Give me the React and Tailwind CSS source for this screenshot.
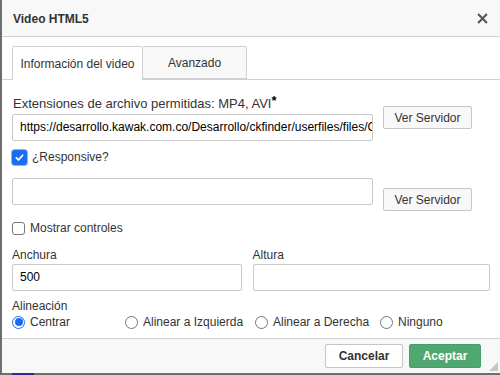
import React from 'react';

const font = { fontFamily: '"Liberation Sans", Arial, sans-serif' };

function Checkbox({ checked }) {
  if (checked) {
    return (
      <span className="flex h-[15px] w-[15px] items-center justify-center rounded-[3px] bg-[#1a6cf0] ring-1 ring-[#8ab4f8]">
        <svg width="11" height="11" viewBox="0 0 12 12" fill="none">
          <path d="M2.5 6.3l2.4 2.4 4.6-5.2" stroke="white" strokeWidth="1.9" strokeLinecap="round" strokeLinejoin="round" />
        </svg>
      </span>
    );
  }
  return <span className="block h-[13px] w-[13px] rounded-[3px] border border-[#767676] bg-white" />;
}

function Radio({ checked, label }) {
  return (
    <label className="flex items-center gap-[5px]">
      {checked ? (
        <span className="flex h-[13px] w-[13px] items-center justify-center rounded-full border border-[#1a6cf0] bg-white">
          <span className="block h-[8px] w-[8px] rounded-full bg-[#1a6cf0]" />
        </span>
      ) : (
        <span className="block h-[13px] w-[13px] rounded-full border border-[#767676] bg-white" />
      )}
      <span>{label}</span>
    </label>
  );
}

function Field({ value, className }) {
  return (
    <div className={`h-[27px] overflow-hidden whitespace-nowrap rounded-[2px] border border-[#c9c9c9] bg-white pl-[7px] text-[12px] leading-[25px] text-black ${className}`}>
      {value}
    </div>
  );
}

function ServerButton({ className }) {
  return (
    <button className={`h-[23px] w-[89px] rounded-[2px] border border-[#c6c6c6] bg-[#f8f8f8] text-[12px] text-[#333] ${className}`}>
      Ver Servidor
    </button>
  );
}

export default function App() {
  return (
    <div className="relative h-[375px] w-[500px] overflow-hidden bg-[#6e6e6e] text-[12px] text-[#333]" style={font}>
      <div className="ml-[2px] flex h-[373px] flex-col bg-white">
        {/* title */}
        <div className="flex h-[37px] items-center justify-between border-b border-[#d1d1d1] bg-[#f8f8f8] pl-[11px] pr-[12px] pt-[1px]">
          <span className="font-bold text-[#333]">Video HTML5</span>
          <svg width="11" height="11" viewBox="0 0 10 10">
            <path d="M1 1l8 8M9 1l-8 8" stroke="#555" strokeWidth="1.9" />
          </svg>
        </div>

        {/* tabs */}
        <div className="mt-[9px] flex border-b border-[#d1d1d1] pl-[10px]">
          <div className="-mb-px flex h-[34px] w-[131px] items-center justify-center rounded-t-[2px] border border-b-0 border-[#d1d1d1] bg-white">
            Información del video
          </div>
          <div className="flex h-[33px] w-[104px] items-center justify-center rounded-t-[2px] border border-l-0 border-[#d1d1d1] bg-[#f8f8f8]">
            Avanzado
          </div>
        </div>

        {/* body */}
        <div className="flex-1 px-[10px]">
          <div className="mt-[16px] flex">
            <div className="w-[361px]">
              <div className="pl-[1px] text-[13px] leading-4">Extensiones de archivo permitidas: MP4, AVI<span className="relative -top-[3px] font-bold text-black">*</span></div>
              <Field className="mt-[2px]" value="https://desarrollo.kawak.com.co/Desarrollo/ckfinder/userfiles/files/Ck" />
            </div>
            <ServerButton className="ml-[10px] mt-[10px]" />
          </div>

          <div className="mt-[8px] flex h-4 items-center gap-[5px]">
            <Checkbox checked />
            <span>¿Responsive?</span>
          </div>

          <div className="mt-[13px] flex">
            <Field className="w-[361px]" value="" />
            <ServerButton className="ml-[10px] mt-[10px]" />
          </div>

          <div className="mt-[9px] flex h-4 items-center gap-[5px]">
            <Checkbox />
            <span>Mostrar controles</span>
          </div>

          <div className="mt-[11px] flex gap-[11px]">
            <div className="w-[230px]">
              <div className="leading-4">Anchura</div>
              <Field className="mt-[1px]" value="500" />
            </div>
            <div className="w-[238px]">
              <div className="leading-4">Altura</div>
              <Field className="mt-[1px]" value="" />
            </div>
          </div>

          <div className="mt-[8px] leading-[15px]">Alineación</div>
          <div className="flex h-4 items-center">
            <div className="w-[113px]"><Radio checked label="Centrar" /></div>
            <div className="w-[130px]"><Radio label="Alinear a Izquierda" /></div>
            <div className="w-[125px]"><Radio label="Alinear a Derecha" /></div>
            <Radio label="Ninguno" />
          </div>
        </div>

        {/* footer */}
        <div className="relative flex h-[35px] items-center justify-end gap-[6px] border-t border-[#d1d1d1] bg-[#f8f8f8] pr-[19px]">
          <button className="h-[24px] w-[78px] rounded-[2px] border border-[#c6c6c6] bg-white font-bold text-[#333]">Cancelar</button>
          <button className="h-[24px] w-[72px] rounded-[2px] border border-[#45a06b] bg-[#4ea870] font-bold text-white">Aceptar</button>
          <svg className="absolute bottom-[2px] right-[2px]" width="9" height="9" viewBox="0 0 9 9">
            <path d="M9 0L9 9L0 9Z" fill="#c4c4c4" />
          </svg>
        </div>
      </div>
      <div className="absolute bottom-0 left-[12px] h-[2px] w-[22px] bg-[#2e2a8f]" />
    </div>
  );
}
